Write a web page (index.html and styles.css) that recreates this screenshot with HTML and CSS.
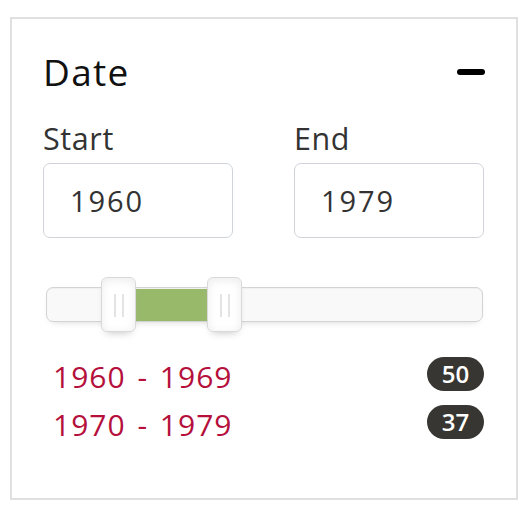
FILE: index.html
```html
<!DOCTYPE html>
<html lang="en">
<head>
<meta charset="utf-8">
<title>Date filter</title>
<link rel="stylesheet" href="styles.css">
</head>
<body>
<section class="panel">
  <header class="panel-head">
    <h2 class="title">Date</h2>
    <button class="collapse" aria-label="Collapse"><span class="minus"></span></button>
  </header>
  <div class="fields">
    <label class="field">
      <span class="label">Start</span>
      <input class="input" type="text" value="1960">
    </label>
    <label class="field">
      <span class="label">End</span>
      <input class="input" type="text" value="1979">
    </label>
  </div>
  <div class="slider">
    <div class="track">
      <div class="range"></div>
      <div class="handle handle-lo"></div>
      <div class="handle handle-hi"></div>
    </div>
  </div>
  <ul class="facets">
    <li class="facet"><a class="facet-link" href="#">1960 - 1969</a><span class="badge">50</span></li>
    <li class="facet"><a class="facet-link" href="#">1970 - 1979</a><span class="badge">37</span></li>
  </ul>
</section>
</body>
</html>
```
FILE: styles.css
```css
* { box-sizing: border-box; }
html, body { margin: 0; padding: 0; background: #fff; }
body { font-family: "Open Sans", "DejaVu Sans", sans-serif; }

.panel {
  margin: 17px 0 0 10px;
  width: 508px;
  height: 483px;
  border: 2px solid #e0e0e0;
  padding: 31px 32px 0 31px;
}

.panel-head {
  display: flex;
  align-items: center;
  justify-content: space-between;
  height: 44px;
}
.title {
  margin: 0;
  font-size: 37px;
  line-height: 44px;
  font-weight: 400;
  letter-spacing: 1.3px;
  color: #111;
}
.collapse {
  border: 0;
  background: none;
  padding: 0;
  margin: 0 -1px 0 0;
  width: 28px;
  height: 6px;
  display: flex;
}
.minus {
  display: block;
  width: 28px;
  height: 6px;
  border-radius: 3px;
  background: #000;
}

.fields {
  display: grid;
  grid-template-columns: 1fr 1fr;
  column-gap: 61px;
  margin-top: 26px;
}
.field { display: flex; flex-direction: column; }
.label {
  font-size: 30.5px;
  line-height: 36px;
  letter-spacing: 0.6px;
  color: #333;
  margin-bottom: 7px;
}
.input {
  width: 100%;
  height: 75px;
  border: 1.5px solid #d0d4d9;
  border-radius: 7px;
  padding: 0 0 0 26px;
  font-family: "Open Sans", "DejaVu Sans", sans-serif;
  font-size: 29px;
  letter-spacing: 1.9px;
  color: #333;
  background: #fff;
  outline: none;
}

.slider {
  margin-top: 49px;
  padding: 0 1px 0 3px;
}
.track {
  position: relative;
  height: 35px;
  border: 1.5px solid #d3d3d3;
  border-radius: 7px;
  background: #f9f9f9;
  box-shadow: inset 0 1px 1px #f0f0f0, 0 4px 8px -6px #bbb;
}
.range {
  position: absolute;
  top: 0.5px;
  bottom: 0;
  left: 89px;
  width: 72px;
  background: #98b96a;
}
.handle {
  position: absolute;
  top: -11.5px;
  width: 35px;
  height: 55px;
  border: 1.5px solid #d9d9d9;
  border-radius: 6px;
  background: #fff;
  box-shadow: inset 0 0 1px #fff, inset 0 2px 10px #ebebeb, 0 5px 9px -5px #bbb;
}
.handle::before,
.handle::after {
  content: "";
  position: absolute;
  top: 16.5px;
  width: 1.5px;
  height: 23px;
  background: #e3e3e3;
}
.handle::before { left: 12.5px; }
.handle::after { left: 20.5px; }
.handle-lo { left: 53.5px; }
.handle-hi { left: 159.5px; }

.facets {
  list-style: none;
  margin: 31px 0 0;
  padding: 0;
}
.facet {
  display: flex;
  justify-content: space-between;
  align-items: flex-start;
  height: 48px;
}
.facet-link {
  font-size: 30px;
  line-height: 48px;
  letter-spacing: 1px;
  word-spacing: 3px;
  color: #b5103c;
  text-decoration: none;
  padding-left: 10px;
}
.badge {
  margin-top: 4px;
  width: 57px;
  height: 34px;
  border-radius: 17px;
  background: #383632;
  color: #fff;
  font-size: 24px;
  font-weight: 600;
  line-height: 34px;
  text-align: center;
}
```
